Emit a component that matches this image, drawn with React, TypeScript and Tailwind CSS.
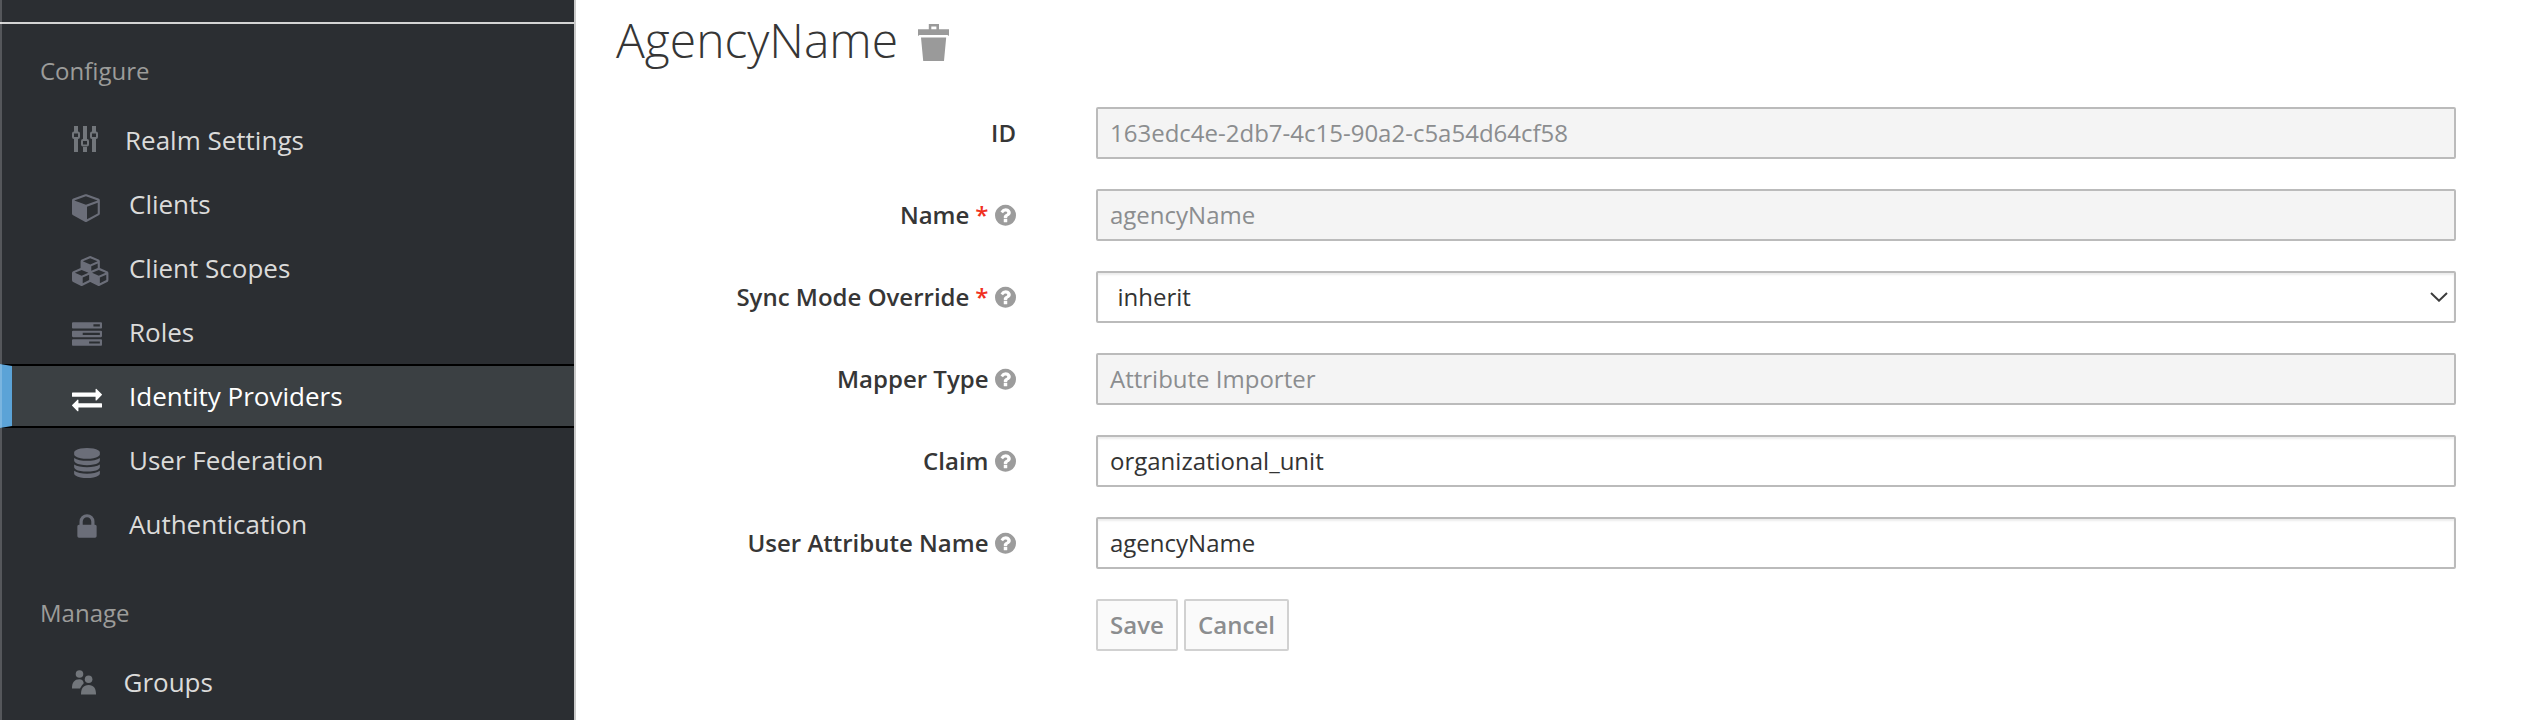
import { ReactNode } from 'react';

/* Font-style glyphs: 1792 units per em, y axis pointing up. */
const Glyph = ({ d, x = 0, w = 1792, className }: { d: string; x?: number; w?: number; className: string }) => (
  <svg className={className} viewBox={`${x} -1536 ${w} 1792`} fill="currentColor">
    <path transform="scale(1 -1)" d={d} />
  </svg>
);

const CUBE =
  'M896 -93l640 349v636l-640 -233v-752zM832 772l698 254l-698 254l-698 -254zM1664 1024v-768q0 -35 -18 -65t-49 -47l-704 -384q-28 -16 -61 -16t-61 16l-704 384q-31 17 -49 47t-18 65v768q0 40 23 73t61 47l704 256q22 8 44 8t44 -8l704 -256q38 -14 61 -47t23 -73z';
const CUBES =
  'M640 -96l384 192v314l-384 -164v-342zM576 358l404 173l-404 173l-404 -173zM1664 -96l384 192v314l-384 -164v-342zM1600 358l404 173l-404 173l-404 -173zM1152 651l384 165v266l-384 -164v-267zM1088 1030l441 189l-441 189l-441 -189zM2176 512v-416q0 -36 -19 -67t-52 -47l-448 -224q-25 -14 -57 -14t-57 14l-448 224q-4 2 -7 4q-2 -2 -7 -4l-448 -224q-25 -14 -57 -14t-57 14l-448 224q-33 16 -52 47t-19 67v416q0 38 21.5 70t56.5 48l434 186v400q0 38 21.5 70t56.5 48l448 192q23 10 50 10t50 -10l448 -192q35 -16 56.5 -48t21.5 -70v-400l434 -186q36 -16 57 -48t21 -70z';
const TASKS =
  'M1024 128h640v128h-640v-128zM640 640h1024v128h-1024v-128zM1280 1152h384v128h-384v-128zM1792 320v-256q0 -26 -19 -45t-45 -19h-1664q-26 0 -45 19t-19 45v256q0 26 19 45t45 19h1664q26 0 45 -19t19 -45zM1792 832v-256q0 -26 -19 -45t-45 -19h-1664q-26 0 -45 19t-19 45v256q0 26 19 45t45 19h1664q26 0 45 -19t19 -45zM1792 1344v-256q0 -26 -19 -45t-45 -19h-1664q-26 0 -45 19t-19 45v256q0 26 19 45t45 19h1664q26 0 45 -19t19 -45z';
const EXCHANGE =
  'M1792 352v-192q0 -13 -9.5 -22.5t-22.5 -9.5h-1376v-192q0 -13 -9.5 -22.5t-22.5 -9.5q-12 0 -24 10l-319 320q-9 9 -9 22q0 14 9 23l320 320q9 9 23 9q13 0 22.5 -9.5t9.5 -22.5v-192h1376q13 0 22.5 -9.5t9.5 -22.5zM1792 896q0 -14 -9 -23l-320 -320q-9 -9 -23 -9q-13 0 -22.5 9.5t-9.5 22.5v192h-1376q-13 0 -22.5 9.5t-9.5 22.5v192q0 13 9.5 22.5t22.5 9.5h1376v192q0 14 9 23t23 9q12 0 24 -10l319 -319q9 -9 9 -23z';
const DATABASE =
  'M768 768q237 0 443 43t325 127v-170q0 -69 -103 -128t-280 -93.5t-385 -34.5t-385 34.5t-280 93.5t-103 128v170q119 -84 325 -127t443 -43zM768 0q237 0 443 43t325 127v-170q0 -69 -103 -128t-280 -93.5t-385 -34.5t-385 34.5t-280 93.5t-103 128v170q119 -84 325 -127t443 -43zM768 384q237 0 443 43t325 127v-170q0 -69 -103 -128t-280 -93.5t-385 -34.5t-385 34.5t-280 93.5t-103 128v170q119 -84 325 -127t443 -43zM768 1536q208 0 385 -34.5t280 -93.5t103 -128v-128q0 -69 -103 -128t-280 -93.5t-385 -34.5t-385 34.5t-280 93.5t-103 128v128q0 69 103 128t280 93.5t385 34.5z';
const LOCK =
  'M320 768h512v192q0 106 -75 181t-181 75t-181 -75t-75 -181v-192zM1152 672v-576q0 -40 -28 -68t-68 -28h-960q-40 0 -68 28t-28 68v576q0 40 28 68t68 28h32v192q0 184 132 316t316 132t316 -132t132 -316v-192h32q40 0 68 -28t28 -68z';
const QUESTION =
  'M896 160v192q0 14 -9 23t-23 9h-192q-14 0 -23 -9t-9 -23v-192q0 -14 9 -23t23 -9h192q14 0 23 9t9 23zM1152 832q0 88 -55.5 163t-138.5 116t-170 41q-243 0 -371 -213q-15 -24 8 -42l132 -100q7 -6 19 -6q16 0 25 12q53 68 86 92q34 24 86 24q48 0 85.5 -26t37.5 -59q0 -38 -20 -61t-68 -45q-63 -28 -115.5 -86.5t-52.5 -125.5v-36q0 -14 9 -23t23 -9h192q14 0 23 9t9 23q0 19 21.5 49.5t54.5 49.5q32 18 49 28.5t46 35t44.5 48t28 60.5t12.5 81zM1536 640q0 -209 -103 -385.5t-279.5 -279.5t-385.5 -103t-385.5 103t-279.5 279.5t-103 385.5t103 385.5t279.5 279.5t385.5 103t385.5 -103t279.5 -279.5t103 -385.5z';

const navGlyph = 'mt-[6.6px] block h-[30px] w-[30px] shrink-0';

const Sliders = () => (
  <svg className="-mt-0.5 block h-[26px] w-[26px]" viewBox="0 0 26 26" fill="none" stroke="#72767b">
    <path d="M4 0V6M4 13V26M13 0V14M13 21V26M22 0V6M22 13V26" strokeWidth="4" />
    <rect x="1" y="6.500" width="6" height="5.500" rx="1" strokeWidth="2" />
    <rect x="10" y="14" width="6" height="5.500" rx="1" strokeWidth="2" />
    <rect x="19" y="6.500" width="6" height="5.500" rx="1" strokeWidth="2" />
  </svg>
);

const Users = () => (
  <svg className="block h-[25px] w-6" viewBox="0 0 24 25" fill="#72767b">
    <circle cx="7.500" cy="4" r="3.800" />
    <circle cx="16.600" cy="9.300" r="3.800" />
    <path d="M0 18.600C0 12.700 2.200 9.300 7.500 9.300C9.600 9.300 11 10.500 11.600 12.400C12 13.600 10.900 14 10 15.200L8 18.600Z" />
    <path d="M9 24.500C9 18.500 11.200 15 16.600 15C21.900 15 24 18.500 24 24.500Z" />
  </svg>
);

const Trash = () => (
  <svg className="block h-[37px] w-[31px]" viewBox="0 0 31 37" fill="#9a9a9a" fillRule="evenodd">
    <path d="M0 5.300H10.800V0H21V5.300H31V12L29.500 11H1.500L0 12ZM13.300 2.600V5.300H18.400V2.600Z" />
    <path d="M3 13.500H28.200L26 37H5.200Z" />
  </svg>
);

const Help = () => <Glyph d={QUESTION} w={1536} className="ml-[6.500px] block h-[24.500px] w-[21px] text-[#9c9c9c]" />;

const NavItem = ({ icon, gap, active, children }: { icon: ReactNode; gap: string; active?: boolean; children: ReactNode }) => (
  <li
    className={
      active
        ? 'flex h-16 items-center border-y-2 border-l-12 border-y-black border-l-[#5ba3d7] bg-[#3b4043] pl-[60px] text-white'
        : 'flex h-16 items-center pl-[72px] text-[#dbdbda]'
    }
  >
    <span className={active ? 'shrink-0 text-white' : 'shrink-0 text-[#6b6e79]'}>{icon}</span>
    <span className={`text-[26px] leading-9 whitespace-nowrap ${gap}`}>{children}</span>
  </li>
);

const Label = ({ text, required, help = true }: { text: string; required?: boolean; help?: boolean }) => (
  <label className="flex w-[440px] shrink-0 items-center justify-end text-[24px] leading-8 font-semibold whitespace-nowrap text-[#363636]">
    {text}
    {required && <span className="ml-[6px] text-[#f0311f]">*</span>}
    {help && <Help />}
  </label>
);

const base = 'ml-20 flex h-[52px] w-[1360px] items-center rounded-[2px] border-2 border-[#bbb] text-[24px] leading-8';

const Field = ({ value, disabled }: { value: string; disabled?: boolean }) => (
  <div
    className={
      disabled
        ? `${base} bg-[#f4f4f4] px-3 text-[#8b8d8f]`
        : `${base} bg-white px-3 text-[#333] shadow-[inset_0_2px_2px_rgba(3,3,3,0.075)]`
    }
  >
    {value}
  </div>
);

const button =
  'flex h-[52px] items-center justify-center rounded-[2px] border-2 border-[#d1d1d1] bg-[#fafafa] text-[24px] leading-8 font-semibold text-[#8b8d8f]';

export default function App() {
  return (
    <div className="flex h-[720px] w-[2526px] overflow-hidden bg-white font-['Open_Sans',sans-serif]">
      <aside className="relative w-[576px] shrink-0 border-r-2 border-[#cacaca] bg-[#2b2e32]">
        <div className="h-6 border-b-2 border-[#d4d4d4]" />
        <h2 className="mt-[31px] pl-10 text-[24px] leading-8 text-[#9c9c9a]">Configure</h2>
        <ul className="mt-[21px]">
          <NavItem icon={<Sliders />} gap="ml-[27px]">Realm Settings</NavItem>
          <NavItem icon={<Glyph d={CUBE} className={navGlyph} />} gap="ml-[27px]">Clients</NavItem>
          <NavItem icon={<Glyph d={CUBES} w={2304} className="mt-[6.6px] block h-[30px] w-[38.570px]" />} gap="ml-[18.430px]">
            Client Scopes
          </NavItem>
          <NavItem icon={<Glyph d={TASKS} className={navGlyph} />} gap="ml-[27px]">Roles</NavItem>
          <NavItem active icon={<Glyph d={EXCHANGE} className={navGlyph} />} gap="ml-[27px]">
            Identity Providers
          </NavItem>
          <NavItem icon={<Glyph d={DATABASE} x={-128} className={navGlyph} />} gap="ml-[27px]">User Federation</NavItem>
          <NavItem icon={<Glyph d={LOCK} x={-320} className={navGlyph} />} gap="ml-[27px]">Authentication</NavItem>
        </ul>
        <h2 className="mt-[41px] pl-10 text-[24px] leading-8 text-[#9c9c9a]">Manage</h2>
        <ul className="mt-[21px]">
          <NavItem icon={<Users />} gap="ml-[27.500px]">Groups</NavItem>
        </ul>
        <div className="absolute inset-y-0 left-0 w-0.5 bg-white/20" />
      </aside>
      <main className="flex-1 pl-10">
        <div className="flex h-[79px] items-center">
          <h1 className="text-[48px] leading-[66px] font-light text-[#363636]">AgencyName</h1>
          <div className="mt-[6px] ml-5">
            <Trash />
          </div>
        </div>
        <form className="mt-7 -ml-10 flex flex-col gap-[30px]">
          <div className="flex items-center">
            <Label text="ID" help={false} />
            <Field value="163edc4e-2db7-4c15-90a2-c5a54d64cf58" disabled />
          </div>
          <div className="flex items-center">
            <Label text="Name" required />
            <Field value="agencyName" disabled />
          </div>
          <div className="flex items-center">
            <Label text="Sync Mode Override" required />
            <div className={`${base} justify-between bg-white pr-[6px] pl-[19.500px] text-[#333] shadow-[inset_0_2px_2px_rgba(3,3,3,0.075)]`}>
              inherit
              <svg className="block h-[10px] w-[18px]" viewBox="0 0 18 10" fill="none" stroke="#3c3c3c" strokeWidth="2">
                <path d="M1 1L9 8.700L17 1" />
              </svg>
            </div>
          </div>
          <div className="flex items-center">
            <Label text="Mapper Type" />
            <Field value="Attribute Importer" disabled />
          </div>
          <div className="flex items-center">
            <Label text="Claim" />
            <Field value="organizational_unit" />
          </div>
          <div className="flex items-center">
            <Label text="User Attribute Name" />
            <Field value="agencyName" />
          </div>
          <div className="flex gap-[6px] pl-[520px]">
            <button type="button" className={`${button} w-[82px]`}>Save</button>
            <button type="button" className={`${button} w-[105px]`}>Cancel</button>
          </div>
        </form>
      </main>
    </div>
  );
}
